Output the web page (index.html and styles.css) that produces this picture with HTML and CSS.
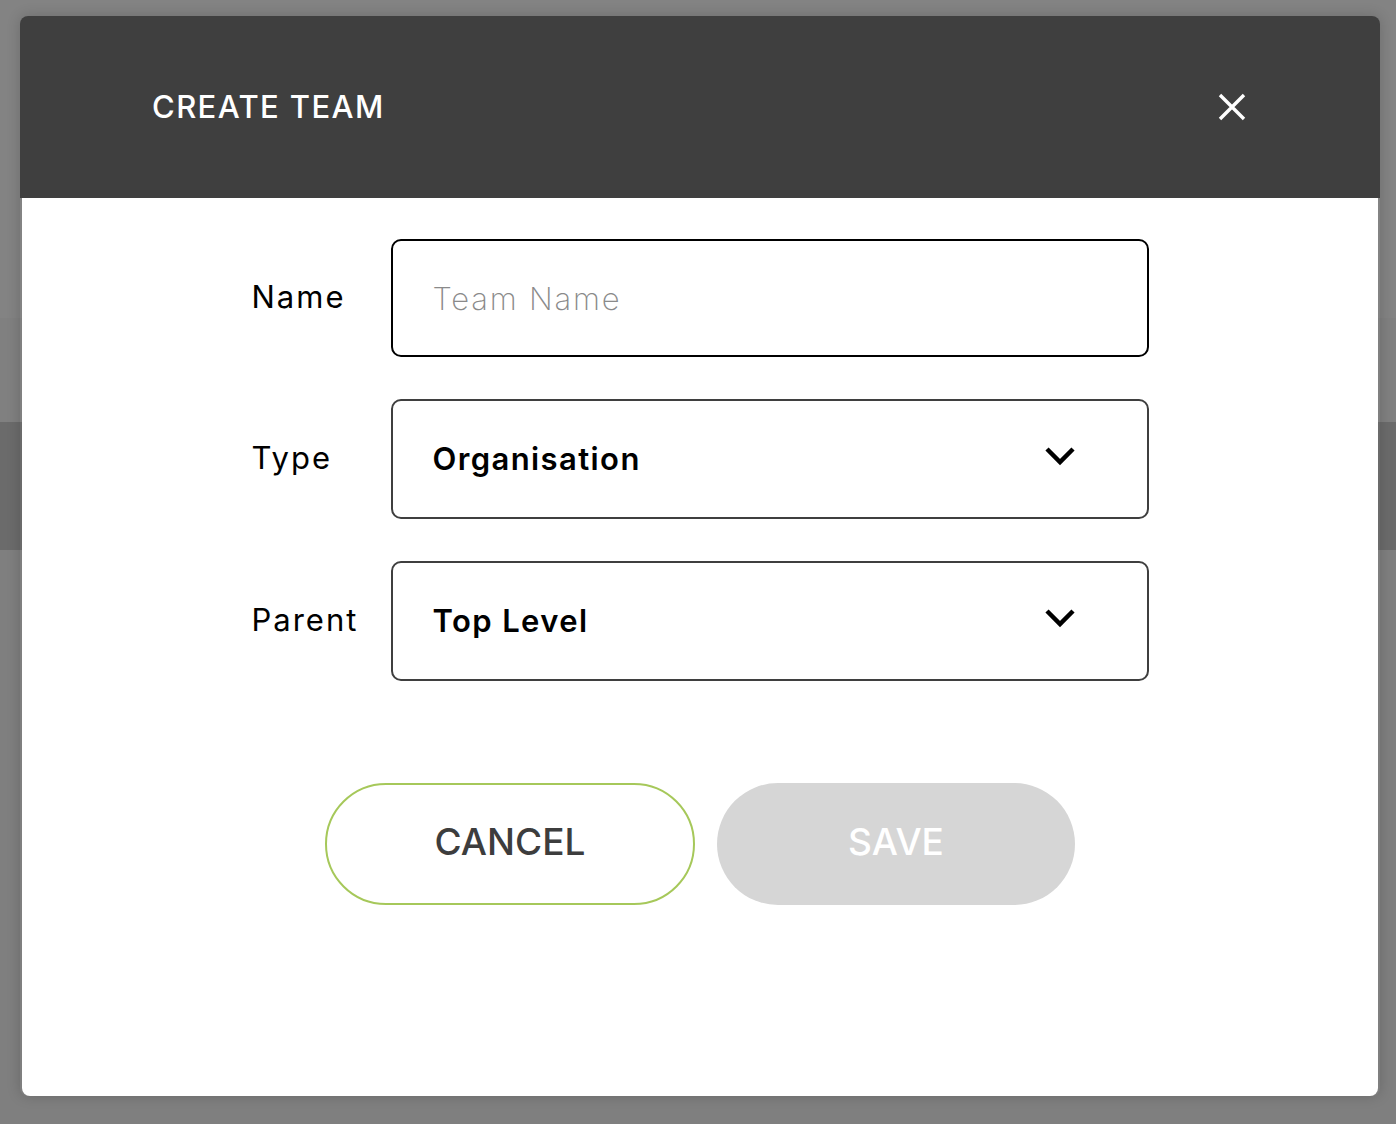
FILE: index.html
```html
<!DOCTYPE html>
<html lang="en">
<head>
    <meta charset="UTF-8">
    <meta name="viewport" content="width=device-width, initial-scale=1.0">
    <title>Create Team</title>
    <link rel="stylesheet" href="styles.css">
</head>
<body>
    <div class="page">
        <div class="page-top"></div>
        <div class="page-strip"></div>
        <div class="page-band"></div>
        <div class="page-rest"></div>
    </div>

    <div class="overlay">
        <div class="modal">
            <div class="modal-header">
                <h1>CREATE TEAM</h1>
                <button class="close" aria-label="Close">
                    <svg width="28" height="28" viewBox="0 0 28 28">
                        <path d="M2 2 L26 26 M26 2 L2 26" stroke="#fff" stroke-width="3.4" fill="none"/>
                    </svg>
                </button>
            </div>
            <div class="modal-body">
                <div class="form">
                    <label class="label" for="teamName">Name</label>
                    <input class="field field-input" id="teamName" type="text" placeholder="Team Name">

                    <span class="label">Type</span>
                    <div class="field field-select">
                        <span>Organisation</span>
                        <svg class="chevron" width="32" height="21" viewBox="0 0 32 21">
                            <path d="M3 3 L16 16 L29 3" stroke="#000" stroke-width="4.5" fill="none"/>
                        </svg>
                    </div>

                    <span class="label">Parent</span>
                    <div class="field field-select">
                        <span>Top Level</span>
                        <svg class="chevron" width="32" height="21" viewBox="0 0 32 21">
                            <path d="M3 3 L16 16 L29 3" stroke="#000" stroke-width="4.5" fill="none"/>
                        </svg>
                    </div>
                </div>

                <div class="actions">
                    <button class="btn btn-cancel">CANCEL</button>
                    <button class="btn btn-save" disabled>SAVE</button>
                </div>
            </div>
        </div>
    </div>
</body>
</html>
```

FILE: styles.css
```css
body {
    margin: 0;
    font-family: Inter, "Open Sans", sans-serif;
    background-color: #808080;
    color: #000;
}
.page {
    height: 1124px;
    overflow: hidden;
}
.page-top {
    height: 318px;
    background-color: #838383;
}
.page-strip {
    height: 104px;
    background-color: #808080;
}
.page-band {
    height: 128px;
    background-color: #6b6b6b;
}
.page-rest {
    height: 574px;
    background-color: #7f7f7f;
}
.overlay {
    position: fixed;
    inset: 0;
}
.modal {
    width: 1360px;
    margin: 16px 0 0 20px;
    box-shadow: 0 0 14px rgba(0,0,0,0.18);
    border-radius: 8px;
}
.modal-header {
    height: 182px;
    background-color: #3f3f3f;
    border-radius: 8px 8px 0 0;
    display: flex;
    align-items: center;
    justify-content: space-between;
    padding: 0 124px 0 132px;
}
.modal-header h1 {
    margin: 0 0 2px;
    color: #fff;
    font-size: 31px;
    font-weight: 500;
    letter-spacing: 1.4px;
}
.close {
    background: none;
    border: none;
    padding: 0;
    width: 48px;
    height: 48px;
    display: flex;
    align-items: center;
    justify-content: center;
    cursor: pointer;
}
.modal-body {
    margin: 0 2px;
    height: 898px;
    box-sizing: border-box;
    padding-top: 41px;
    background-color: #fff;
    border-radius: 0 0 8px 8px;
}
.form {
    width: 897px;
    margin: 0 auto;
    display: grid;
    grid-template-columns: 139px 1fr;
    row-gap: 42px;
    align-items: center;
}
.label {
    font-size: 31px;
    letter-spacing: 2px;
    color: #000;
    margin-bottom: 4px;
}
.field {
    box-sizing: border-box;
    width: 100%;
    height: 120px;
    border-radius: 10px;
    font-family: inherit;
    font-size: 31px;
    padding: 0 40px;
}
.field-input {
    height: 118px;
    border: 2px solid #000;
    outline: none;
    color: #000;
}
.field-input::placeholder {
    color: #8a8a8a;
    font-weight: 200;
    letter-spacing: 1.8px;
}
.field-select {
    border: 2px solid #3f3f3f;
    display: flex;
    align-items: center;
    justify-content: space-between;
    font-weight: 600;
    letter-spacing: 1.4px;
    padding-right: 71px;
}
.field-select span {
    margin-bottom: 2px;
}
.chevron {
    margin-top: -5px;
}
.actions {
    margin-top: 102px;
    display: flex;
    justify-content: center;
    gap: 22px;
}
.btn {
    height: 122px;
    border-radius: 61px;
    font-family: inherit;
    font-size: 37px;
    font-weight: 500;
    padding: 0 0 6px;
    cursor: pointer;
}
.btn-cancel {
    width: 370px;
    background-color: #fff;
    border: 2px solid #a6c85a;
    color: #3d3d3d;
}
.btn-save {
    width: 358px;
    background-color: #d6d6d6;
    border: none;
    color: #fff;
    cursor: default;
}
```
